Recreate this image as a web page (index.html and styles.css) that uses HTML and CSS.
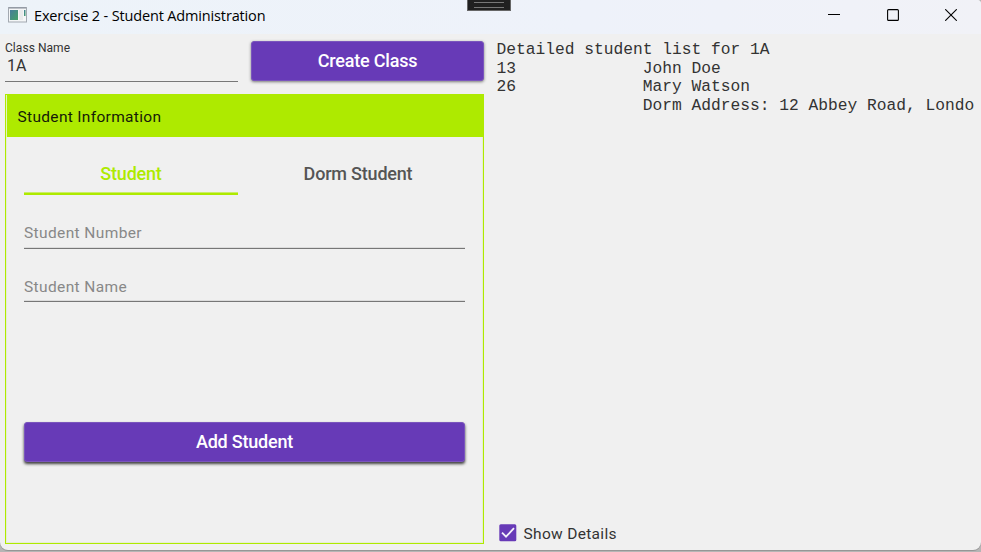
FILE: index.html
```
<!DOCTYPE html>
<html lang="en">
<head>
<meta charset="utf-8">
<title>Exercise 2 - Student Administration</title>
<link rel="stylesheet" href="styles.css">
</head>
<body>
<div class="window">
  <header class="titlebar">
    <svg class="app-icon" width="19" height="16" viewBox="0 0 19 16">
      <defs><linearGradient id="g" x1="0" y1="0" x2="1" y2="1"><stop offset="0" stop-color="#457c9b"/><stop offset="1" stop-color="#43a267"/></linearGradient></defs>
      <rect x=".5" y=".5" width="18" height="14.5" fill="#f4f6f7" stroke="#a3a9b1"/>
      <path d="M1 1h17" stroke="#858c98"/>
      <rect x="2" y="3" width="8" height="10" fill="url(#g)"/>
      <rect x="11" y="3" width="4" height="10" fill="#e9eaeb"/>
      <rect x="16" y="3" width="1.5" height="6" fill="url(#g)"/>
    </svg>
    <h1 class="title">Exercise 2 - Student Administration</h1>
    <div class="controls">
      <svg width="12" height="12" viewBox="0 0 12 12"><path d="M0 5.5h12"/></svg>
      <svg width="12" height="12" viewBox="0 0 12 12"><rect x=".6" y=".6" width="10.8" height="10.8" rx="1"/></svg>
      <svg width="12" height="12" viewBox="0 0 12 12"><path d="M.2.2l11.6 11.6M11.8.2L.2 11.8"/></svg>
    </div>
    <div class="grip"></div>
  </header>
  <main class="content">
    <section class="left">
      <div class="class-row">
        <div class="class-field">
          <label class="caption">Class Name</label>
          <div class="value">1A</div>
        </div>
        <button class="btn">Create Class</button>
      </div>
      <div class="card">
        <h2 class="card-head">Student Information</h2>
        <div class="card-body">
          <div class="tabs">
            <div class="tab active">Student</div>
            <div class="tab">Dorm Student</div>
          </div>
          <div class="field number">Student Number</div>
          <div class="field name">Student Name</div>
          <button class="btn add">Add Student</button>
        </div>
      </div>
    </section>
    <section class="right">
<pre class="list">Detailed student list for 1A
13             John Doe
26             Mary Watson
               Dorm Address: 12 Abbey Road, London</pre>
      <label class="details">
        <svg width="18" height="18" viewBox="0 0 18 18"><rect x=".3" y=".3" width="17" height="17" rx="1.5" fill="#673ab7"/><path d="M3 8.7l4 4 8-8.5" fill="none" stroke="#f4f0fa" stroke-width="1.8"/></svg>
        <span>Show Details</span>
      </label>
    </section>
  </main>
</div>
</body>
</html>
```
FILE: styles.css
```
* { box-sizing: border-box; }
body { margin: 0; width: 981px; height: 552px; overflow: hidden; background: #b5b5b5; font-family: Roboto, sans-serif; }
.window { height: 550px; display: flex; flex-direction: column; background: #f0f0f0; border-radius: 0 4px 8px 8px; box-shadow: 0 1px 0 #969696; overflow: hidden; }
.titlebar { position: relative; height: 34px; flex: none; display: flex; align-items: flex-start; background: linear-gradient(90deg, #edf3f9, #eef2fa 60%, #f1f2f7); }
.app-icon { margin: 7px 0 0 8px; }
.title { margin: 5px 0 0 7px; font: 400 14.5px/21px "Open Sans", sans-serif; letter-spacing: -0.15px; color: #000; white-space: nowrap; }
.controls { display: flex; gap: 46.5px; margin: 9px 24px 0 auto; }
.controls svg { fill: none; stroke: #000; stroke-width: 1.1; }
.grip { position: absolute; left: 467px; top: 0; width: 44px; height: 11px; background: #202020; border: 1px solid #666; border-top: 0; }
.grip::after { content: ""; display: block; width: 30px; height: 4px; margin: 2px 0 0 6px; border: solid #777; border-width: 1px 0; }
.content { flex: 1; display: flex; gap: 12.5px; padding: 0 7px 6px 5px; min-height: 0; }
.left { width: 479px; flex: none; display: flex; flex-direction: column; }
.class-row { display: flex; justify-content: space-between; padding-top: 7px; height: 60px; }
.class-field { width: 233px; height: 41px; border-bottom: 1px solid #777; color: #333; }
.caption { display: block; font-size: 12px; line-height: 14px; letter-spacing: .05px; }
.value { padding-left: 2px; font-size: 16px; line-height: 22px; }
.btn { display: block; width: 233px; height: 40px; padding: 0; border: 1px solid #7a55bd; border-radius: 3px; background: #673ab7; color: #fff; font: 500 18px/38px Roboto, sans-serif; letter-spacing: -.2px; box-shadow: 0 1px 3px rgba(0,0,0,.5); }
.card { flex: 1; display: flex; flex-direction: column; border: 1px solid #aeea00; box-shadow: inset 0 0 0 1px rgba(174,234,0,.12); }
.card-head { margin: 0; height: 42px; padding-left: 10.5px; border-left: 1px solid #e3f5b8; background: #aeea00; color: #151a08; font-weight: 400; font-size: 15.5px; line-height: 44px; letter-spacing: .32px; }
.card-body { padding: 17px 18px 0; display: flex; flex-direction: column; }
.tabs { display: flex; height: 41px; gap: 13px; }
.tab { width: 214px; text-align: center; font-weight: 500; font-size: 18px; line-height: 40px; letter-spacing: -.2px; color: #555; }
.active { color: #aeea00; border-bottom: 2px solid #aeea00; box-shadow: inset 0 -1px 0 #cbed6a; }
.field { height: 30px; border-bottom: 1px solid #777; box-shadow: inset 0 -1px 0 #dcdcdc; color: #888; font-size: 15.5px; line-height: 28px; letter-spacing: .38px; }
.number { margin-top: 24px; }
.name { margin-top: 23px; line-height: 30px; }
.add { width: 441px; margin-top: 120px; box-shadow: 0 2px 3px rgba(0,0,0,.75); }
.right { flex: 1; min-width: 0; display: flex; flex-direction: column; justify-content: space-between; }
.list { margin: 7px 0 0; overflow: hidden; font: 16.25px/18.5px "Courier New", "Liberation Mono", monospace; color: #333; }
.details { display: flex; align-items: center; gap: 7px; height: 20px; margin: 0 0 1px 2px; font-size: 15.5px; line-height: 20px; letter-spacing: .32px; color: #333; }
.details span { padding-top: 1px; }
```
